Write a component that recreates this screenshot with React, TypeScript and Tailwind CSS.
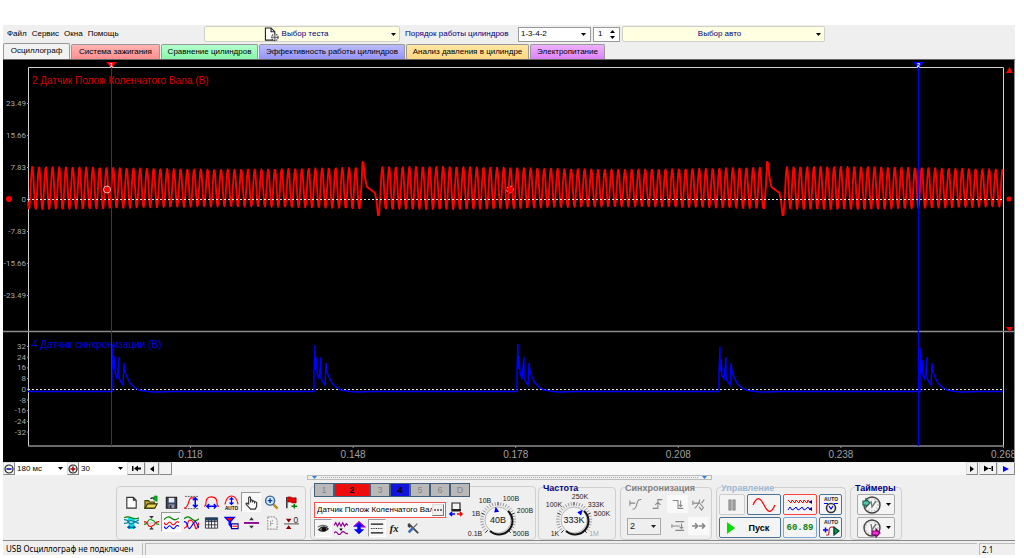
import React from 'react';
import clsx from 'clsx';

type IconProps = { children: React.ReactNode; className?: string; box?: string };

const Icon: React.FC<IconProps> = ({ children, className = 'w-4 h-4', box = '0 0 16 16' }) => (
  <svg viewBox={box} className={className} fill="none" strokeWidth="1.2">
    {children}
  </svg>
);

const RED = '#ff0000';
const BLUE = '#0000ff';

const tabs = [
  { label: 'Осциллограф', style: 'w-[67px] h-4 bg-[#f2f2f2] pb-[2px]' },
  { label: 'Система зажигания', style: 'w-[89px] h-[15px] bg-linear-to-b from-[#ffb4b4] to-[#ff8e8e]' },
  { label: 'Сравнение цилиндров', style: 'w-[97px] h-[15px] bg-linear-to-b from-[#b4ffce] to-[#86f7aa]' },
  { label: 'Эффективность работы цилиндров', style: 'w-[146px] h-[15px] bg-linear-to-b from-[#bcbcff] to-[#9494fa]' },
  { label: 'Анализ давления в цилиндре', style: 'w-[123px] h-[15px] bg-linear-to-b from-[#ffe6a4] to-[#ffd67e]' },
  { label: 'Электропитание', style: 'w-[75px] h-[15px] bg-linear-to-b from-[#eeb0ff] to-[#dc82fa]' },
];

const channels = [
  { name: '1', style: 'w-5 bg-[#b9b9b9] text-[#858585]' },
  { name: '2', style: 'w-9 bg-[#ee0c0c] text-black font-bold' },
  { name: '3', style: 'w-5 bg-[#b9b9b9] text-[#858585]' },
  { name: '4', style: 'w-5 bg-[#1212dd] text-black font-bold' },
  { name: '5', style: 'w-5 bg-[#b9b9b9] text-[#858585]' },
  { name: '6', style: 'w-5 bg-[#b9b9b9] text-[#858585]' },
  { name: 'D', style: 'w-5 bg-[#b9b9b9] text-[#858585]' },
];

// crankshaft sensor, 58 teeth and a gap of two
const TOOTH = 6.74;

function crankPath() {
  const points: string[] = [];
  const gaps = [360, 764.5];
  const zero = 128;
  let x = 25;
  while (x <= 1000) {
    const gap = gaps.find((g) => x >= g - 3.4 && x < g + 16);
    if (gap !== undefined) {
      points.push(
        `${gap - 3.4},148`, `${gap - 1.5},125`, `${gap - 0.5},102`, `${gap + 0.5},103`, `${gap + 2},118`,
        `${gap + 4},127`, `${gap + 8},130`, `${gap + 12},133`, `${gap + 13.5},141`, `${gap + 15},155`,
        `${gap + 16},155`,
      );
      x = gap + 17;
      continue;
    }
    const phase = ((x - 29.3) / TOOTH) * 2 * Math.PI;
    const past = gaps.filter((g) => x > g).length;
    const shift = past ? ((gaps[past - 1] + 19.4 - 29.3) / TOOTH) * 2 * Math.PI : 0;
    const amp = 19.8 + 1.3 * Math.cos((x - 25) / 64);
    points.push(`${x.toFixed(1)},${(zero - amp * Math.cos(phase - shift)).toFixed(1)}`);
    x += 0.6;
  }
  return 'M' + points.join('L');
}

const pulses = [
  { x: 109, top: 284 },
  { x: 311, top: 285 },
  { x: 514, top: 284 },
  { x: 716, top: 287 },
  { x: 917, top: 288 },
];

function syncPath() {
  let d = 'M25,331.5';
  pulses.forEach(({ x, top }) => {
    d += `L${x},331.5L${x},${top + 26}L${x + 1},${top}L${x + 1},${top + 25}L${x + 2},${top + 12}L${x + 3},${top + 28}`
      + `L${x + 5},319L${x + 6},308L${x + 7},297L${x + 7},318L${x + 9},322L${x + 11},325L${x + 12},303`
      + `L${x + 13},312L${x + 15},317L${x + 18},323L${x + 22},327L${x + 27},330L${x + 36},331.5`
      + `L${x + 42},332L${x + 60},331.5`;
  });
  return d + 'L1000,331.5';
}

const mainScale = ['23.49', '15.66', '7.83', '0', '-7.83', '-15.66', '-23.49'];
const syncScale = ['32', '24', '16', '8', '0', '-8', '-16', '-24', '-32'];
const timeScale = ['0.118', '0.148', '0.178', '0.208', '0.238', '0.268'];

const Chart = () => (
  <svg viewBox="0 0 1012 402" className="block w-full bg-black font-['Liberation_Sans']">
    <path d="M25.5 386V7.5H1000.5V386" fill="none" stroke="#d0d0d0" />
    <path d="M0 271.5H1011M25 386H1001" stroke="#8c8c8c" strokeWidth="1.4" />
    <path d="M1011.5 0V402" stroke="#8c8c8c" />
    <g fontSize="8" fill="#a8a8a8" textAnchor="end" fontFamily="Roboto">
      {mainScale.map((v, i) => (
        <g key={v}>
          <text x="23" y={46 + i * 32}>{v}</text>
          <path d={`M24 ${43.5 + i * 32}h2`} stroke="#a8a8a8" />
        </g>
      ))}
      {syncScale.map((v, i) => (
        <g key={v}>
          <text x="23" y={289 + i * 10.7}>{v}</text>
          <path d={`M24 ${286.5 + i * 10.7}h2`} stroke="#a8a8a8" />
        </g>
      ))}
    </g>
    <g fontSize="10" fill="#a0a0a0" textAnchor="middle">
      {timeScale.map((v, i) => (
        <g key={v}>
          <text x={187.5 + i * 162.6} y="398">{v}</text>
          <path d={`M${187.5 + i * 162.6} 386v2`} stroke="#8c8c8c" />
        </g>
      ))}
    </g>
    <g fontSize="10">
      <text x="29" y="24" fill="#d80000">2 Датчик Полож Коленчатого Вала (В)</text>
      <text x="29" y="288" fill="#0000e0">4 Датчик синхронизации (В)</text>
    </g>

    <path d={crankPath()} fill="none" stroke={RED} strokeWidth="1.9" strokeLinejoin="round" />
    <path d="M25 139.5H1000M25 329.5H1000" stroke="#e8e8e8" strokeDasharray="2 2" />
    <path d={syncPath()} fill="none" stroke={BLUE} strokeWidth="1.4" />

    <path d="M108.5 7V386" stroke="#c00000" />
    <path d="M103 2h11l-5.500 6z" fill={RED} />
    <text x="108.500" y="7" fontSize="6" fontWeight="bold" fill="#fff" textAnchor="middle">1</text>
    <path d="M915.5 7V386" stroke="#0000e8" strokeWidth="1.3" />
    <path d="M910 2h11l-5.500 6z" fill={BLUE} />
    <text x="915.500" y="7" fontSize="6" fontWeight="bold" fill="#fff" textAnchor="middle">2</text>

    <circle cx="104" cy="129.500" r="3.500" fill={RED} stroke="#e0c0c0" />
    <circle cx="507" cy="129.500" r="3.500" fill={RED} stroke="#e09090" strokeDasharray="2 2" />
    <circle cx="6" cy="139" r="3" fill={RED} />
    <circle cx="1006" cy="139" r="2.500" fill={RED} />
    <path d="M1003 13h7l-3.500-6zM1003 267h7l-3.500 5z" fill={RED} />
  </svg>
);

const Down = ({ className = 'w-[5px] h-[3px]' }: { className?: string }) => (
  <svg viewBox="0 0 5 3" className={className}><path d="M0 0h5L2.500 3z" fill="currentColor" /></svg>
);

type PickProps = { label: string; value: string; className: string; disabled?: boolean };

const Pick: React.FC<PickProps> = ({ label, value, className, disabled }) => (
  <div className={clsx('relative flex items-center', className)}>
    <select aria-label={label} disabled={disabled} className="w-full h-full appearance-none bg-transparent pl-[2px] outline-none">
      <option>{value}</option>
    </select>
    <span className="absolute right-1 pointer-events-none"><Down /></span>
  </div>
);

const MenuBar = () => (
  <div className="flex h-[18px] items-center">
    <nav className="flex w-[201px] gap-[5px] pl-1">
      {['Файл', 'Сервис', 'Окна', 'Помощь'].map((m) => <button key={m}>{m}</button>)}
    </nav>
    <button className="relative flex w-[196px] h-4 items-center justify-center gap-[2px] rounded-[2px] border border-[#d0d0c4] bg-[#ffffe1] pr-3 text-[#000080]">
      <Icon className="w-[16px] h-[15px]">
        <path d="M1 1h6l4 4v9H1z" fill="#fff" stroke="#222" />
        <path d="M7 1v4h4" stroke="#222" />
        <circle cx="11" cy="11" r="3.500" fill="#ddd" stroke="#444" strokeDasharray="1.500 1" />
        <path d="M8 11h7M11 8v7" stroke="#444" strokeWidth=".8" />
      </Icon>
      Выбор теста
      <span className="absolute right-[3px] text-black"><Down /></span>
    </button>
    <label htmlFor="order" className="w-[118px] pl-[5px] text-[#000080]">Порядок работы цилиндров</label>
    <div className="relative flex w-[73px] h-[15px] items-center border border-[#999] bg-white">
      <select id="order" className="w-full h-full appearance-none pl-[2px] outline-none"><option>1-3-4-2</option></select>
      <span className="absolute right-1 pointer-events-none"><Down /></span>
    </div>
    <div className="ml-[2px] flex w-[27px] h-[15px] items-center border border-[#999] bg-white">
      <input aria-label="Номер цилиндра" defaultValue="1" className="w-[15px] pl-1 outline-none" />
      <Icon className="w-[7px] h-[11px]" box="0 0 7 11">
        <path d="M1 4h5L3.500 1zM1 7h5l-2.500 3z" fill="#000" />
      </Icon>
    </div>
    <button className="relative ml-[2px] flex w-[203px] h-4 items-center justify-center rounded-[2px] border border-[#d0d0c4] bg-[#ffffe1] pr-2 text-[#000080]">
      Выбор авто
      <span className="absolute right-[3px] text-black"><Down /></span>
    </button>
  </div>
);

const navButton = 'flex h-[13px] items-center justify-center border border-[#ddd] border-r-[#888] border-b-[#888] bg-[#f2f2f2]';

const TimeBar = () => (
  <div className="flex h-[13px] bg-[#f8f8f8]">
    <button aria-label="Сжать" className={clsx(navButton, 'w-3')}>
      <Icon className="w-[10px] h-[10px] shrink-0" box="0 0 10 10">
        <circle cx="5" cy="5" r="4" stroke="#222" /><path d="M2.500 5h5" stroke="#0000a0" strokeWidth="1.500" />
      </Icon>
    </button>
    <Pick label="Развертка" value="180  мс" className="w-[52px] bg-white" />
    <button aria-label="Растянуть" className={clsx(navButton, 'w-3')}>
      <Icon className="w-[10px] h-[10px] shrink-0" box="0 0 10 10">
        <circle cx="5" cy="5" r="4" stroke="#222" /><path d="M2.500 5h5M5 2.500v5" stroke="#b00000" strokeWidth="1.500" />
      </Icon>
    </button>
    <Pick label="Масштаб" value="30" className="w-[48px] bg-white" />
    <button aria-label="В начало" className={clsx(navButton, 'w-[18px]')}>
      <Icon className="w-[9px] h-[7px]" box="0 0 9 7"><path d="M0 1h1.500v5H0zM2 3.500l4-3v2h3v2H6v2z" fill="#000" /></Icon>
    </button>
    <button aria-label="Назад" className={clsx(navButton, 'w-[14px]')}>
      <Icon className="w-[4px] h-[6px]" box="0 0 4 6"><path d="M4 0v6L0 3z" fill="#000" /></Icon>
    </button>
    <div className={clsx(navButton, 'w-[13px]')} />
    <div className="flex-1" />
    <button aria-label="Вперед" className={clsx(navButton, 'w-3')}>
      <Icon className="w-[4px] h-[6px]" box="0 0 4 6"><path d="M0 0v6l4-3z" fill="#000" /></Icon>
    </button>
    <button aria-label="В конец" className={clsx(navButton, 'ml-px w-[18px]')}>
      <Icon className="w-[9px] h-[7px]" box="0 0 9 7"><path d="M0 .5l5 3-5 3zM5 3h2v1H5zM7.500 1H9v5H7.500z" fill="#000" /></Icon>
    </button>
    <button aria-label="Воспроизвести" className={clsx(navButton, 'w-[18px]')}>
      <Icon className="w-[6px] h-[6px]" box="0 0 6 6"><path d="M0 0v6l6-3z" fill={BLUE} /></Icon>
    </button>
  </div>
);

const tools: { name: string; active?: boolean; art: React.ReactNode }[] = [
  { name: 'Новый', art: <path d="M3 2.500h7l3 3V14H3zM10 2.500v3h3" fill="#fff" stroke="#333" /> },
  {
    name: 'Открыть',
    art: <><path d="M1 6h4l1 1.500h5V14H1z" fill="#b8a830" stroke="#444400" /><path d="M1 14l3-4.500h10L11.500 14z" fill="#e8d860" stroke="#333300" /><path d="M7 4q2-2 4 0" stroke="#111" /><path d="M11 1h3v6l-4-2z" fill="#00b020" stroke="#008000" strokeWidth=".6" /></>,
  },
  { name: 'Сохранить', art: <><path d="M2.500 2.500h11V14h-11z" fill="#384868" stroke="#222" /><path d="M5 3h6v5H5z" fill="#e4e8f0" /><path d="M5 10h6v4H5z" fill="#99a" /><path d="M6 11h2v3H6z" fill="#223" /></> },
  {
    name: 'Размах',
    art: <><path d="M0 14c6 0 4-11 8-11h3" stroke={RED} /><path d="M1 1.500h14M1 14.500h14" stroke="#333" strokeWidth=".8" strokeDasharray="2 1" /><path d="M12 3v10M9.500 5.500L12 3l2.500 2.500M9.500 10.500L12 13l2.500-2.500" stroke={BLUE} strokeWidth="1.600" /></>,
  },
  {
    name: 'Период',
    art: <><path d="M0 12q2 0 2-3C2 4 4 2 8 2s6 2 6 7q0 3 2 3" stroke={RED} /><path d="M3 12h10M5.500 9.500L3 12l2.500 2.500M10.500 9.500L13 12l-2.500 2.500" stroke={BLUE} strokeWidth="1.500" /></>,
  },
  {
    name: 'Авто',
    art: <><path d="M1 10C2 5 4 1 8 1s6 4 7 9" stroke={RED} /><path d="M8 3v7M6 5l2-2 2 2M6 8l2 2 2-2" stroke={BLUE} strokeWidth="1.300" /><text x="8" y="15.500" fontSize="5" fontWeight="bold" fill="#000" textAnchor="middle">AUTO</text></>,
  },
  { name: 'Рука', active: true, art: <path d="M5 10V3q1-2 2 0v5V6q1-1.500 2 0v2-1q1-1.500 2.200 0v2-1q1-1.500 2.300 0v4l-1.500 3H7L2 9.500q1-2 3 .5" fill="#fff" stroke="#333" /> },
  {
    name: 'Лупа',
    art: <><path d="M10 10l4.500 4.500" stroke="#b09020" strokeWidth="2.500" /><circle cx="6.500" cy="6" r="4.800" fill="#d8ecff" stroke="#356090" strokeWidth="1.500" /><path d="M4 6h5M6.500 3.500v5" stroke="#0040a0" strokeWidth="1.500" /></>,
  },
  { name: 'Флажок', art: <><path d="M3 2v12" stroke="#333" strokeWidth="1.600" /><path d="M4 2h3l2 1h4v5.500H9L7 7.500H4z" fill="#f00000" stroke="#700000" strokeWidth=".6" /><path d="M8 12h6M11 9.500v5" stroke="#008000" strokeWidth="1.600" /></> },
  {
    name: 'Наложение',
    art: <><path d="M4 3h8v3h-8zM5 8h6v7H5z" fill="#00e0f0" /><path d="M0 3q4-2 8 0t8 0" stroke="#008000" /><path d="M0 5q4 0 5 3t6 0 5-3M0 9q4 0 5-2t6 0 5 2" stroke="#0080a0" strokeWidth="1.300" /><path d="M4 13h8M6 11.500L4 13l2 1.500M10 11.500l2 1.500-2 1.500" stroke="#0050a0" /></>,
  },
  {
    name: 'Совместить',
    art: <><path d="M0 10q3 0 4-3t4-2 4 3 4 2" stroke="#00a000" /><path d="M0 7q3 0 4 3t4 2 4-3 4-2" stroke={RED} /><path d="M5.500 1h5L8 4zM5.500 15.500h5L8 12.500z" fill="#333" /><path d="M0 8.500h16" stroke="#777" strokeWidth=".7" strokeDasharray="1 1" /></>,
  },
  {
    name: 'Три линии',
    active: true,
    art: <><path d="M0 5q4-5 8-1.500T16 3" stroke="#008000" /><path d="M0 8q2 4 4 1t4 0 4 0 4-1" stroke={RED} /><path d="M0 12q2 4 4 1t4 0 4 0 4-1" stroke={BLUE} /></>,
  },
  { name: 'Сигналы', art: <><path d="M0 4q4-4 8 0t8 0" stroke="#008000" /><path d="M0 14q3 0 4-5t4-3 4 7 4-5" stroke={RED} /><path d="M0 7q3 0 4 5t4 0 4-5 4 7" stroke={BLUE} /></> },
  { name: 'Таблица', art: <><path d="M1.500 3h13v11h-13zM5 3v11M8 3v11M11.500 3v11M2 7h12M2 10.500h12" fill="#fff" stroke="#223" strokeWidth=".9" /><path d="M1.500 3h13v3h-13z" fill="#204060" /></> },
  {
    name: 'Фильтр',
    art: <><path d="M1 2.500h10L7 7v5L5.500 10V7z" fill={RED} stroke={BLUE} strokeWidth="1.400" /><path d="M8 9.500h7v5H8z" fill="#fff" stroke="#0000a0" /><path d="M9 12h5" stroke={RED} /></>,
  },
  { name: 'Разделить', art: <><path d="M0 8.500h16" stroke="#900090" strokeWidth="2" /><path d="M5.500 5.500h5L8 2.500zM5.500 11.500h5L8 14.500z" fill="#333" /></> },
  { name: 'Отчет', art: <><path d="M4 2h7l3 3v10H4z" fill="#f4f4f4" stroke="#999" strokeDasharray="2 1" /><path d="M7 6v6M9 5v2M7 9h3" stroke="#aaa" /></> },
  { name: 'Ноль', art: <><path d="M0 9.500h9M9 9.500h7" stroke="#333" strokeWidth=".9" /><path d="M2 4h6L5 8zM2 15h6l-3-4z" fill="#900000" /><text x="10" y="8" fontSize="9" fill="#222">0</text></> },
];

const ToolGroup = () => (
  <div className="mt-[3px] grid w-[190px] grid-cols-9 content-start rounded border border-[#cfcfcf] px-1 pt-[5px]">
    {tools.map((t) => (
      <button
        key={t.name}
        aria-label={t.name}
        className={clsx('flex h-5 items-center justify-center', t.active && 'border border-t-[#999] border-l-[#999] border-[#fff] bg-[#f8f8f8]')}
      >
        <Icon className="w-[15px] h-[15px] shrink-0">{t.art}</Icon>
      </button>
    ))}
  </div>
);

type DialProps = {
  cx: number;
  cy: number;
  value: string;
  angle: number;
  width: number;
  height: number;
  labels: { t: string; x: number; y: number; off?: boolean }[];
};

const Dial: React.FC<DialProps> = ({ cx, cy, value, angle, width, height, labels }) => {
  const ticks = Array.from({ length: 29 }, (_, i) => ((-225 + i * (270 / 28)) * Math.PI) / 180);
  const at = (angle * Math.PI) / 180;
  return (
    <svg viewBox={`0 0 ${width} ${height}`} width={width} height={height} className="shrink-0 overflow-visible font-['Liberation_Sans']">
      {ticks.map((a, i) => (
        <path
          key={i}
          d={`M${cx + 14.5 * Math.cos(a)} ${cy + 14.5 * Math.sin(a)}L${cx + 18 * Math.cos(a)} ${cy + 18 * Math.sin(a)}`}
          stroke={i % 7 === 0 ? '#222' : '#999'}
        />
      ))}
      <circle cx={cx} cy={cy} r="13" fill="#f4f4f4" stroke="#b8b8b8" />
      <path d={`M${cx + 10} ${cy - 9}A13 13 0 0 1 ${cx - 8} ${cy + 11}`} fill="none" stroke="#111" strokeWidth="2" />
      <path
        d="M-2.500 2L0-3.500 2.500 2z"
        transform={`translate(${cx + 10 * Math.cos(at)} ${cy + 10 * Math.sin(at)}) rotate(${angle + 90})`}
        fill={BLUE}
      />
      <text x={cx} y={cy + 3} fontSize="9" textAnchor="middle" fill="#111">{value}</text>
      {labels.map((l) => (
        <text key={l.t} x={l.x} y={l.y} fontSize="7" textAnchor="middle" fill={l.off ? '#aaa' : '#222'}>{l.t}</text>
      ))}
    </svg>
  );
};

const channelTools: { name: string; active?: boolean; art: React.ReactNode }[] = [
  { name: 'Показать', active: true, art: <><path d="M3 10q5-6 11-1-5 5-11 1z" fill="#999" stroke="#222" /><path d="M2 7q6-4 12 0" stroke="#666" /><circle cx="9" cy="9.500" r="2.500" fill="#000" /></> },
  { name: 'Сгладить', art: <><path d="M0 5l2-3 2 4 2-4 2 4 2-4 2 4 2-3 2 2M0 14q2-3 4 0t4 0 4-1 4 1" stroke="#900090" strokeWidth="1.400" /><path d="M6 8.500h4l-2 3z" fill="#000" /></> },
  { name: 'Сдвиг', art: <><path d="M2 6.500L8 1l6 5.500h-4v3h4L8 15 2 9.500h4v-3z" fill={BLUE} /><path d="M2 6.500L8 1l6 5.500h-4" stroke="#a000c0" strokeWidth="1.600" /></> },
  { name: 'Уровень', active: true, art: <><path d="M1 3.500h14M1 13.500h14" stroke="#111" strokeWidth="1.500" /><path d="M1 8.500h14" stroke="#111" strokeDasharray="1 1" /></> },
  { name: 'Функция', art: <text x="2" y="12" fontSize="12" fontWeight="bold" fontStyle="italic" fontFamily="Liberation Serif" fill="#111">fx</text> },
  { name: 'Настройки', art: <><path d="M3 3l10 10M3 3v3l2 1M13 13l1 1" stroke="#444" strokeWidth="2" /><path d="M13 3L8 8" stroke="#666" strokeWidth="1.500" /><path d="M8 8l-5 5" stroke="#3870b0" strokeWidth="3" /></> },
];

const ChannelGroup = () => (
  <div className="mt-[3px] ml-1 flex w-[226px] rounded border border-[#cfcfcf]">
    <div className="-mt-[4px] flex flex-col pl-[3px]">
      <div className="flex">
        {channels.map((c) => (
          <button key={c.name} className={clsx('h-[14px] border border-[#42607c] text-[9px] leading-3', c.style)}>{c.name}</button>
        ))}
      </div>
      <div className="mt-[5px] flex h-4 items-center">
        <div className="flex w-[132px] h-4 items-center border border-[#ff5050] bg-white">
          <input aria-label="Название канала" defaultValue="Датчик Полож Коленчатого Вала (В)" className="w-[117px] pl-[2px] outline-none" />
          <button aria-label="Выбрать датчик" className="flex h-3 w-3 items-center justify-center border border-[#ddd] border-r-[#777] border-b-[#777] bg-[#f0f0f0]">
            <Icon className="w-2 h-2" box="0 0 8 8"><path d="M0 4h2M3 4h2M6 4h2" stroke="#000" /></Icon>
          </button>
        </div>
        <button aria-label="Заменить" className="ml-[2px]">
          <Icon>
            <path d="M4 1h8v8H4z" fill="#f4f4f4" stroke="#222" />
            <path d="M4 8h9" stroke="#222" strokeWidth="2" />
            <path d="M7 12H2M4 10l-2 2 2 2" stroke={BLUE} strokeWidth="1.500" />
            <path d="M9 12h5M12 10l2 2-2 2" stroke={RED} strokeWidth="1.500" />
          </Icon>
        </button>
      </div>
      <div className="mt-[1px] flex">
        {channelTools.map((t) => (
          <button key={t.name} aria-label={t.name} className={clsx('flex h-[18px] w-[18px] items-center justify-center', t.active && 'border border-t-[#999] border-l-[#999] border-[#fff] bg-[#f6f6f6]')}>
            <Icon className="w-[14px] h-[14px]">{t.art}</Icon>
          </button>
        ))}
      </div>
    </div>
    <Dial
      cx={28}
      cy={33}
      value="40В"
      angle={-100}
      width={62}
      height={50}
      labels={[
        { t: '0.1В', x: 5, y: 49 },
        { t: '1В', x: 6, y: 29 },
        { t: '10В', x: 15, y: 16 },
        { t: '100В', x: 41, y: 14 },
        { t: '200В', x: 55, y: 26 },
        { t: '500В', x: 51, y: 49 },
      ]}
    />
  </div>
);

type GroupProps = { title: string; className: string; tone?: string; children: React.ReactNode };

const Group: React.FC<GroupProps> = ({ title, className, tone = 'text-[#000080]', children }) => (
  <fieldset className={clsx('min-w-0 rounded border border-[#cfcfcf]', className)}>
    <legend className={clsx('ml-1 h-[9px] text-[9px] leading-[10px] font-bold', tone)}>{title}</legend>
    {children}
  </fieldset>
);

const syncTools: { name: string; active?: boolean; art: React.ReactNode }[] = [
  { name: 'По уровню', art: <path d="M1 4v6M1 7h6M4 14q4 0 5-6t5-5" /> },
  { name: 'По фронту', art: <path d="M3 13h6V3h5M9 6l-3 3M9 6l3 3" /> },
  { name: 'По спаду', active: true, art: <path d="M2 4h6v9h6M11 4v7M9 9l2 2 2-2" /> },
  { name: 'Вручную', art: <path d="M1 4v5M1 7h6M3 13q4-3 6-10M8 6l5 6-2 3-3-4M14 3l-3 4" /> },
];

const syncTools2: { name: string; active?: boolean; art: React.ReactNode }[] = [
  { name: 'Порог', art: <path d="M5 3h10M1 8h9M5 13h10M1 6v4M12 5v6M10 9l2 2 2-2" /> },
  { name: 'Сжатие', active: true, art: <path d="M0 8h6M3.500 5l3 3-3 3M8 8h6M11.500 5l3 3-3 3" strokeWidth="1.800" /> },
];

const SyncButtons = ({ items }: { items: typeof syncTools }) => (
  <>
    {items.map((t) => (
      <button key={t.name} aria-label={t.name} disabled className={clsx('flex h-[18px] w-[21px] items-center justify-center', t.active && 'bg-[#f9f9f9]')}>
        <Icon className="w-[14px] h-[14px]"><g stroke="#888">{t.art}</g></Icon>
      </button>
    ))}
  </>
);

const ctl = 'flex h-[21px] items-center justify-center rounded-[2px] border bg-[#f4f4f4]';
const ctlBlue = 'border-[#4d7396]';

const Clock = ({ inward }: { inward?: boolean }) => (
  <Icon className="w-5 h-5" box="0 0 20 20">
    <circle cx="10" cy="10" r="8" fill="#f4f4f4" stroke="#444" strokeWidth="1.400" />
    <circle cx="10" cy="10" r="6" stroke="#aaa" strokeDasharray="1 2" />
    <path d="M9 6l1 6 4-6" stroke="#777" strokeWidth="1.400" />
    {inward
      ? <path d="M1 6h3V4l4 4-4 4v-2H1z" fill="#50c8b0" stroke="#206050" />
      : <path d="M10 13h4v-2l4 4-4 4v-2h-4z" fill="#f030d0" stroke="#700060" />}
  </Icon>
);

const ControlGroup = () => (
  <Group title="Управление" className="ml-1 w-[130px]" tone="text-[#9db8d2]">
    <div className="grid grid-cols-[26px_34px_34px_23px] gap-x-[2px] gap-y-[2px] pt-[2px] pl-[2px]">
      <button aria-label="Пауза" className={clsx(ctl, 'border-[#ccc]')}>
        <Icon className="w-2 h-3" box="0 0 8 12"><path d="M1 1h2v10H1zM5 1h2v10H5z" fill="#bbb" stroke="#888" /></Icon>
      </button>
      <button aria-label="Один сигнал" className={clsx(ctl, ctlBlue)}>
        <Icon className="w-6 h-4" box="0 0 24 16"><path d="M1 8C5-1 8 0 12 8s7 9 11 0" stroke={RED} /></Icon>
      </button>
      <button aria-label="Непрерывно" className={clsx(ctl, 'border-[#ff4040]')}>
        <Icon className="w-[26px] h-4" box="0 0 26 16">
          <path d="M1 3l3 3 1-3 3 3 1-3 3 3 1-3 3 3 1-3 3 3 1-3 2 3" stroke={RED} strokeWidth="1" />
          <path d="M1 13l2-3 2 3 2-1 2-2 2 3 2-1 2-2 2 3 2-1 2-2 2 3" stroke={BLUE} strokeWidth="1" />
          <path d="M25 3v4l-3-2zM25 10v4l-3-2z" fill="#000080" />
        </Icon>
      </button>
      <button aria-label="Автонастройка" className={clsx(ctl, ctlBlue)}>
        <Icon className="w-[18px] h-[18px]" box="0 0 18 18">
          <text x="9" y="5" fontSize="5" fontWeight="bold" fill="#222" textAnchor="middle">AUTO</text>
          <circle cx="9" cy="12" r="4.500" stroke="#333" strokeWidth="1.600" />
          <path d="M7 10l2 3 2-3M2 7.500h4M12 7.500h4" stroke={BLUE} />
        </Icon>
      </button>
      <button className={clsx(ctl, ctlBlue, 'col-span-2 gap-[14px] pr-1 font-bold')}>
        <Icon className="w-2 h-3" box="0 0 8 12"><path d="M0 0v12l8-6z" fill="#00e000" /></Icon>
        <span className="text-[9px]">Пуск</span>
      </button>
      <output className={clsx(ctl, "border-[#7fa8d4] font-['Liberation_Mono'] text-[9px] font-bold text-[#108010]")}>60.89</output>
      <button aria-label="Автозапуск" className={clsx(ctl, ctlBlue)}>
        <Icon className="w-[18px] h-[18px]" box="0 0 18 18">
          <text x="9" y="5" fontSize="5" fontWeight="bold" fill="#222" textAnchor="middle">AUTO</text>
          <path d="M4 16h2q1 0 1-4t3-4 2 4v3" stroke="#c02020" />
          <path d="M1 11h5M3.500 8.500v5" stroke={BLUE} strokeWidth="1.500" />
          <path d="M12 8v8l5-4z" fill="#00a020" stroke="#044" />
        </Icon>
      </button>
    </div>
  </Group>
);

const Toolbar = () => (
  <div className="flex h-[57px] pl-[113px]">
    <ToolGroup />
    <ChannelGroup />
    <Group title="Частота" className="ml-[2px] w-[78px]">
      <Dial
        cx={35}
        cy={28}
        value="333K"
        angle={-50}
        width={76}
        height={46}
        labels={[
          { t: '250K', x: 41, y: 7 },
          { t: '100K', x: 15, y: 15 },
          { t: '333K', x: 57, y: 15 },
          { t: '500K', x: 63, y: 24 },
          { t: '1K', x: 16, y: 44 },
          { t: '1M', x: 55, y: 44, off: true },
        ]}
      />
    </Group>
    <Group title="Синхронизация" className="ml-1 w-[92px]" tone="text-[#808080]">
      <div className="flex pt-[3px] pl-1"><SyncButtons items={syncTools} /></div>
      <div className="flex items-center pt-1 pl-[6px]">
        <Pick label="Канал синхронизации" value="2" disabled className="mr-[6px] w-[34px] h-[17px] border border-[#aaa] text-[9px] text-[#222]" />
        <SyncButtons items={syncTools2} />
      </div>
    </Group>
    <ControlGroup />
    <Group title="Таймеры" className="ml-1 w-[52px]">
      <div className="flex flex-col gap-[2px] px-[6px] pt-[2px]">
        <button aria-label="Таймер включения" className={clsx(ctl, 'gap-1 border-[#aaa]')}><Clock inward /><Down /></button>
        <button aria-label="Таймер выключения" className={clsx(ctl, 'gap-1 border-[#aaa]')}><Clock /><Down /></button>
      </div>
    </Group>
  </div>
);

export default function App() {
  return (
    <main className="min-h-screen bg-white pt-[25px] pr-[9px] pl-[3px] font-['Liberation_Sans',sans-serif] text-[8px] leading-[12px] text-black">
      <div className="bg-[#efefef]">
        <MenuBar />
        <div className="flex h-[17px] items-end border-b border-[#666]">
          {tabs.map((t) => (
            <button key={t.label} className={clsx('mr-px rounded-t-[2px] border border-b-0 border-[#999] whitespace-nowrap', t.style)}>{t.label}</button>
          ))}
        </div>
        <Chart />
        <TimeBar />
        <div className="flex h-2 pl-[304px]">
          <div className="flex h-[5px] w-[405px] items-center justify-between border border-[#bbb] px-1 text-[#3080e0]">
            <Down />
            <span className="mx-1 flex-1 border-t border-dotted border-[#8ab0e0]" />
            <Down />
          </div>
        </div>
        <Toolbar />
        <footer className="flex h-[15px] gap-[2px] border-t border-[#888] pt-[2px] font-['Noto_Sans'] whitespace-nowrap">
          <div className="w-[140px] border-r border-[#bbb] pl-[3px]">USB Осциллограф не подключен</div>
          <div className="flex-1 border-t border-l border-[#bbb]" />
          <div className="w-9 border-t border-l border-[#bbb] pl-[2px] leading-[11px]">2.1</div>
        </footer>
      </div>
    </main>
  );
}
